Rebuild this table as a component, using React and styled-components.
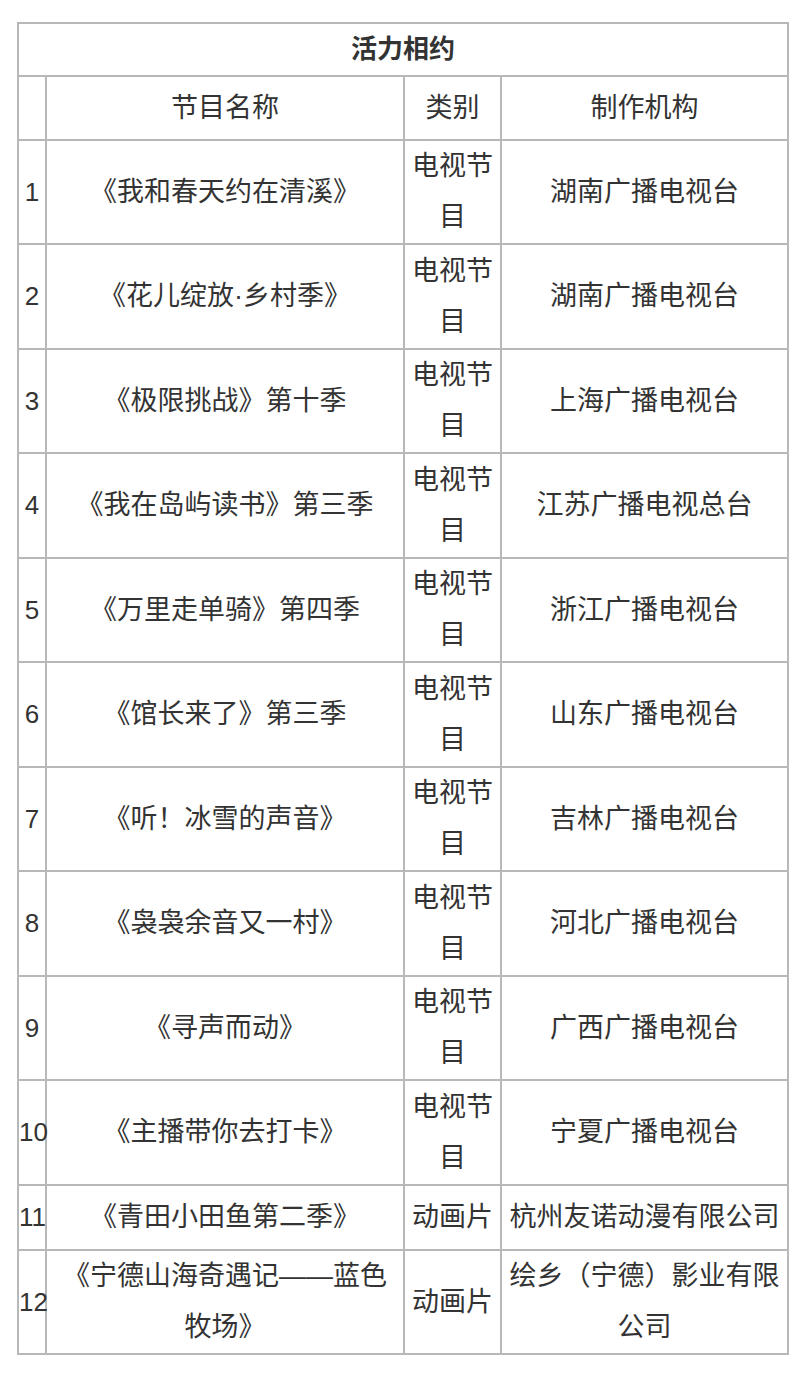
import styled, { createGlobalStyle } from 'styled-components';

const GlobalStyle = createGlobalStyle`
    body {
        margin: 0;
        background: #ffffff;
        font-family: "Liberation Sans", "Noto Sans CJK SC", sans-serif;
        color: #333333;
    }
`

const Page = styled.div`
    padding: 22px 0 30px 17px;
`

const Table = styled.table`
    width: 770px;
    border-collapse: collapse;
    table-layout: fixed;
    font-size: 27px;
    line-height: 51px;
    td, th {
        border: 2px solid #b8b8b8;
        text-align: center;
        vertical-align: middle;
        padding: 0 12px;
        font-weight: 400;
    }
`

const Row = styled.tr`
    height: ${props => props.$h}px;
`

const TitleCell = styled.th`
    && {
        font-weight: 700;
        font-size: 26px;
    }
`

const NumCell = styled.td`
    && {
        padding: 0;
        white-space: nowrap;
        font-size: 26px;
    }
`

// 세번째, 네번째 열은 글자 폭이 넓어서 패딩을 줄임
const NarrowCell = styled.td`
    && {
        padding: 0 3px;
    }
`

const rows = [
    ['《我和春天约在清溪》', '电视节目', '湖南广播电视台', 104],
    ['《花儿绽放·乡村季》', '电视节目', '湖南广播电视台', 105],
    ['《极限挑战》第十季', '电视节目', '上海广播电视台', 104],
    ['《我在岛屿读书》第三季', '电视节目', '江苏广播电视总台', 105],
    ['《万里走单骑》第四季', '电视节目', '浙江广播电视台', 104],
    ['《馆长来了》第三季', '电视节目', '山东广播电视台', 105],
    ['《听！冰雪的声音》', '电视节目', '吉林广播电视台', 104],
    ['《袅袅余音又一村》', '电视节目', '河北广播电视台', 105],
    ['《寻声而动》', '电视节目', '广西广播电视台', 104],
    ['《主播带你去打卡》', '电视节目', '宁夏广播电视台', 105],
    ['《青田小田鱼第二季》', '动画片', '杭州友诺动漫有限公司', 65],
    ['《宁德山海奇遇记——蓝色牧场》', '动画片', '绘乡（宁德）影业有限公司', 104],
]

const App = () => {
    return (
        <Page>
            <GlobalStyle />
            <Table>
                <colgroup>
                    <col style={{ width: 28 }} />
                    <col style={{ width: 358 }} />
                    <col style={{ width: 97 }} />
                    <col style={{ width: 287 }} />
                </colgroup>
                <tbody>
                    <Row $h={51}>
                        <TitleCell colSpan={4}>活力相约</TitleCell>
                    </Row>
                    <Row $h={64}>
                        <td></td>
                        <td>节目名称</td>
                        <NarrowCell>类别</NarrowCell>
                        <NarrowCell>制作机构</NarrowCell>
                    </Row>
                    {rows.map((r, i) => (
                        <Row key={i} $h={r[3]}>
                            <NumCell>{i + 1}</NumCell>
                            <td>{r[0]}</td>
                            <NarrowCell>{r[1]}</NarrowCell>
                            <NarrowCell>{r[2]}</NarrowCell>
                        </Row>
                    ))}
                </tbody>
            </Table>
        </Page>
    )
}

export default App;
